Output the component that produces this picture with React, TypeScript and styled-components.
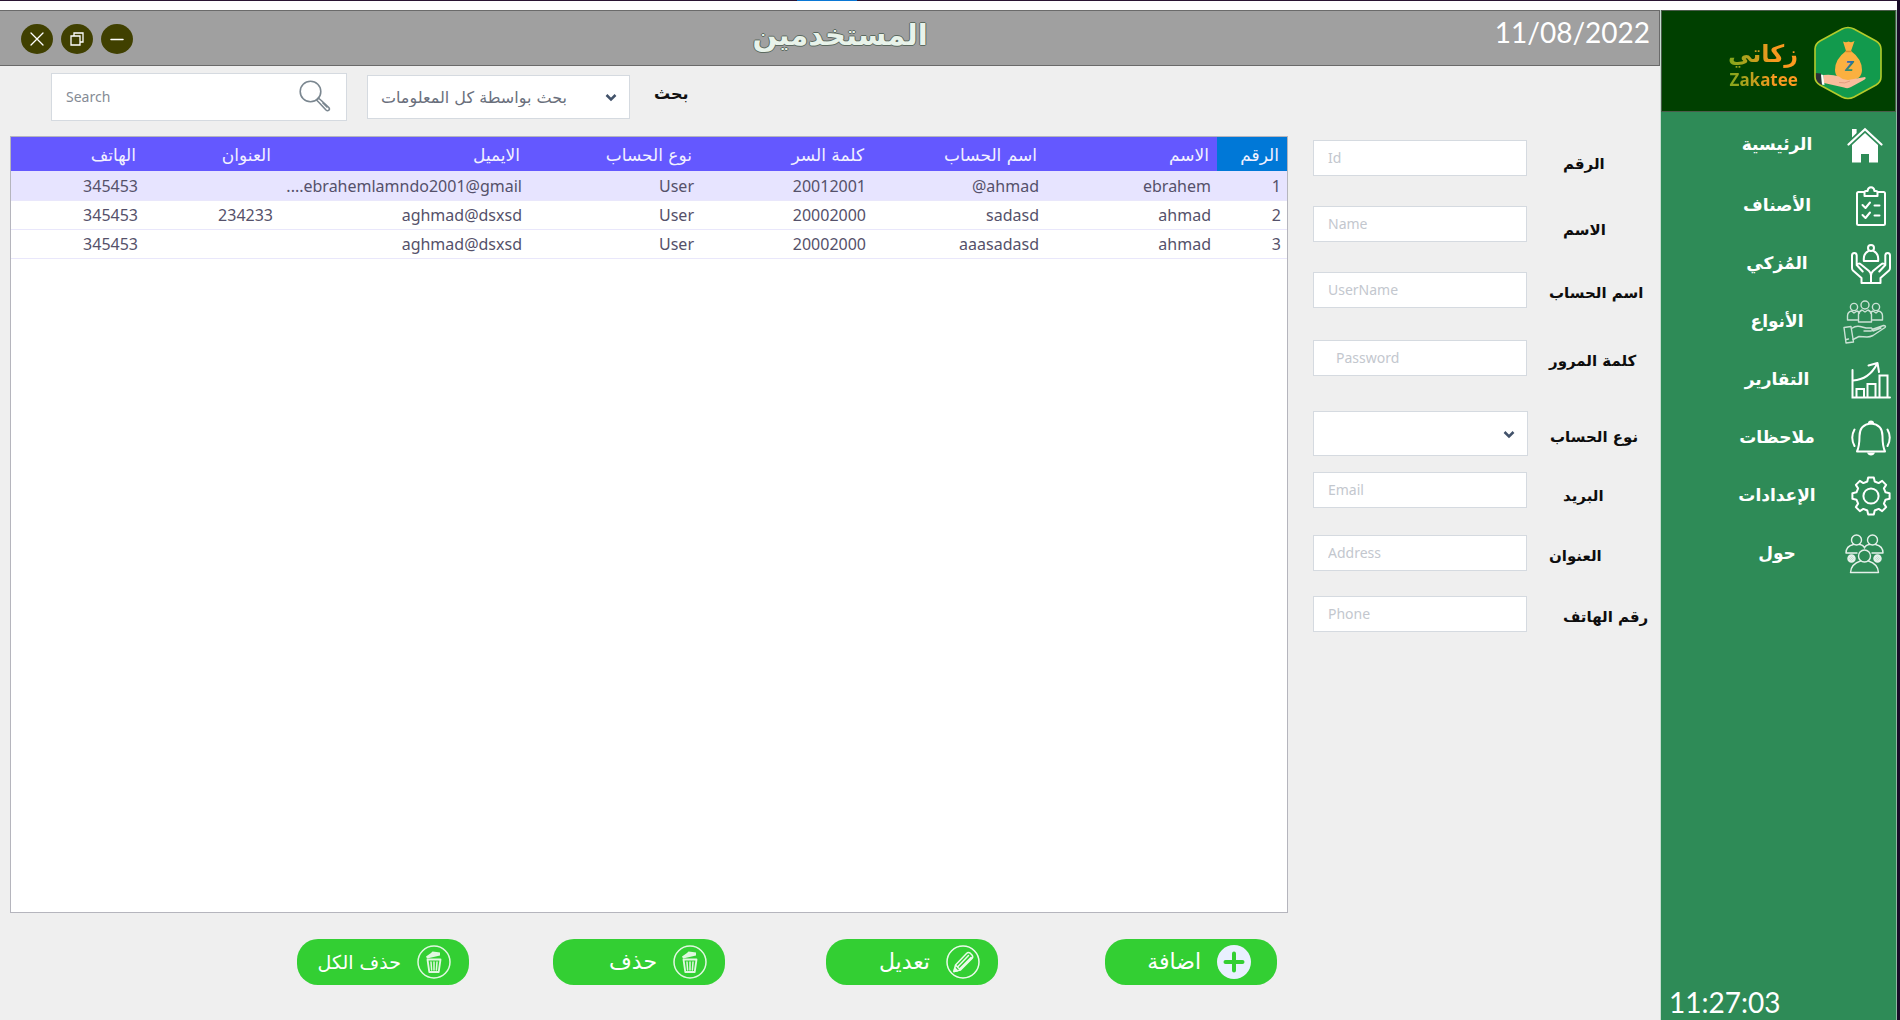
import React from "react";
import styled, { createGlobalStyle, css } from "styled-components";

const latin = `"Noto Sans", "Open Sans", "DejaVu Sans", sans-serif`;
const arabic = `"DejaVu Sans", "Noto Sans", sans-serif`;

const GlobalStyle = createGlobalStyle`
  *, *::before, *::after { box-sizing: border-box; }
  body { margin: 0; background: #efefef; font-family: ${latin}; }
  button, input, select { font: inherit; }
`;

/* ---------- window frame ---------- */

const Frame = styled.div`
  min-height: 100vh;
  display: flex;
  flex-direction: column;
  border-right: 3px solid #1a0b28;
`;

const Strip = styled.div`
  height: 10px;
  padding-left: 42%;
  background: #fff;
  border-top: 1px solid #2a1433;
  display: flex;
`;

const StripMark = styled.span`
  width: 60px;
  height: 1px;
  margin-top: -1px;
  background: #0a78d6;
`;

const Shell = styled.div`
  flex: 1;
  display: grid;
  grid-template-columns: minmax(0, 1fr) 237px;
`;

const Main = styled.main`
  display: flex;
  flex-direction: column;
  background: #efefef;
`;

/* ---------- title bar ---------- */

const TitleBar = styled.header`
  height: 56px;
  display: grid;
  grid-template-columns: 1fr auto 1fr;
  padding-left: 21px;
  background: #a0a0a0;
  border: 1px solid #6a6a6a;
  border-width: 1px 1px 1px 0;
`;

const WindowButtons = styled.div`
  padding-top: 2px;
  display: flex;
  align-items: center;
  gap: 8px;
`;

const WindowButton = styled.button`
  width: 32px;
  height: 30px;
  padding: 0;
  border: 0;
  border-radius: 50%;
  background: #404000;
  color: #fff;
  display: grid;
  place-items: center;
`;

const PageTitle = styled.h1`
  margin: 0;
  font: 700 29px/48px ${arabic};
  color: #e8f3ea;
  text-shadow: 1px 0 #5c6a60, -1px 0 #5c6a60, 0 1px #5c6a60, 0 -1px #5c6a60;
`;

const DateText = styled.time`
  justify-self: end;
  padding-right: 9px;
  font: 400 28px/42px Lato, sans-serif;
  color: #fff;
`;

/* ---------- workspace ---------- */

const Workspace = styled.div`
  flex: 1;
  display: grid;
  grid-template-columns: minmax(0, 1fr) 347px;
  column-gap: 25px;
  padding-left: 10px;
`;

const ListPane = styled.section`
  display: flex;
  flex-direction: column;
`;

const Toolbar = styled.div`
  height: 62px;
  margin-bottom: 8px;
  padding-left: 41px;
  display: flex;
  align-items: center;
`;

const SearchBox = styled.label`
  width: 296px;
  height: 48px;
  margin-right: 20px;
  padding: 0 15px 2px 14px;
  display: flex;
  align-items: center;
  background: #fff;
  border: 1px solid #d5dae0;
`;

const SearchInput = styled.input`
  flex: 1;
  min-width: 0;
  padding: 0;
  border: 0;
  outline: 0;
  background: none;
  font-size: 14px;
  &::placeholder { color: #858b95; opacity: 1; }
`;

const SelectWrap = styled.div<{ $wide?: boolean }>`
  position: relative;
  width: ${(p) => (p.$wide ? 263 : 215)}px;
  height: ${(p) => (p.$wide ? 44 : 45)}px;
`;

const Select = styled.select`
  appearance: none;
  width: 100%;
  height: 100%;
  padding: 0 62px 0 4px;
  border: 1px solid #d5dae0;
  border-radius: 0;
  background: #fff;
  color: #6a6f7c;
  font: 16px ${arabic};
  direction: rtl;
`;

const Chevron = styled.svg`
  position: absolute;
  right: 13px;
  top: calc(50% - 4px);
  pointer-events: none;
`;

const SearchLabel = styled.label`
  margin-left: 24px;
  padding-bottom: 6px;
  font: 700 16px/24px ${arabic};
  color: #111;
`;

const TableFrame = styled.div`
  flex: 1;
  background: #fff;
  border: 1px solid #b5b5bd;
`;

const Table = styled.table`
  width: 100%;
  table-layout: fixed;
  border-collapse: collapse;
  direction: rtl;
`;

const HeadCell = styled.th<{ $active?: boolean }>`
  height: 34px;
  padding: 2px 8px 0 0;
  text-align: right;
  font: 400 17px/32px ${arabic};
  color: #f2f1ff;
  background: ${(p) => (p.$active ? "#0078d7" : "#6458ff")};
`;

const Row = styled.tr<{ $selected?: boolean }>`
  height: 29px;
  background: ${(p) => (p.$selected ? "#e7e4ff" : "#fff")};
  border-bottom: 1px solid #e9e7fb;
`;

const Cell = styled.td`
  padding: 1px 6px 0 0;
  direction: ltr;
  text-align: right;
  white-space: nowrap;
  font-size: 16px;
  line-height: 24px;
  color: #55516a;
`;

const Actions = styled.div`
  padding: 26px 0 35px 287px;
  display: grid;
  grid-template-columns: 256fr 273fr 279fr 183fr;
`;

const ActionButton = styled.button<{ $inset?: boolean; $long?: boolean }>`
  width: 172px;
  height: 46px;
  padding: 0 ${(p) => (p.$inset ? 26 : 18)}px 0 0;
  border: 0;
  border-radius: 21px;
  background: #33cf33;
  color: #fff;
  display: flex;
  align-items: center;
  gap: 16px;
  direction: rtl;
  font: 400 ${(p) => (p.$long ? 19 : 22)}px/28px ${arabic};
`;

/* ---------- form ---------- */

const Form = styled.form`
  padding-top: 74px;
  display: flex;
  flex-direction: column;
`;

const Field = styled.div<{ $gap: number }>`
  display: flex;
  align-items: center;
  margin-bottom: ${(p) => p.$gap}px;
`;

const Input = styled.input<{ $deep?: boolean }>`
  width: 214px;
  height: 36px;
  padding: 0 14px 2px ${(p) => (p.$deep ? 22 : 14)}px;
  border: 1px solid #d5dae0;
  background: #fff;
  outline: 0;
  font-size: 14px;
  &::placeholder { color: #c3c7ce; opacity: 1; }
`;

const FieldLabel = styled.label<{ $indent?: boolean; $low?: boolean }>`
  padding-left: ${(p) => (p.$indent ? 36 : 22)}px;
  padding-top: ${(p) => (p.$low ? 12 : 6)}px;
  font: 700 15px/24px ${arabic};
  color: #0d0d0d;
  white-space: nowrap;
`;

/* ---------- sidebar ---------- */

const Sidebar = styled.aside`
  display: flex;
  flex-direction: column;
  background: #2e8b57;
  border-left: 1px solid #c5dccf;
  border-right: 1px solid #8fb8a2;
`;

const Brand = styled.div`
  height: 102px;
  padding: 4px 13px 0 0;
  display: flex;
  align-items: center;
  justify-content: flex-end;
  gap: 16px;
  background: #004000;
  border: 1px solid #4b5c4b;
`;

const BrandName = styled.div`
  display: flex;
  flex-direction: column;
  align-items: flex-end;
  padding-top: 4px;
  background: linear-gradient(90deg, #7fa81c, #f7981f 65%, #ff9a1f);
  background-clip: text;
  -webkit-background-clip: text;
  color: transparent;
`;

const BrandArabic = styled.span`
  font: 700 24px/30px ${arabic};
`;

const BrandLatin = styled.span`
  font: 700 17px/22px "Noto Sans", sans-serif;
`;

const Nav = styled.nav`
  flex: 1;
  padding-top: 4px;
  display: flex;
  flex-direction: column;
`;

const NavLink = styled.a<{ $current?: boolean }>`
  height: 58px;
  padding-left: 65px;
  display: flex;
  align-items: center;
  color: #fff;
  text-decoration: none;
  ${(p) => p.$current && css`margin-bottom: 3px;`}
`;

const NavText = styled.span`
  width: 102px;
  text-align: center;
  font: 700 17px/26px "Liberation Serif", "DejaVu Sans", serif;
`;

const NavIcon = styled.span<{ $near?: boolean }>`
  width: 46px;
  margin-left: ${(p) => (p.$near ? 14 : 20)}px;
  display: flex;
  justify-content: center;
`;

const Clock = styled.time`
  padding: 0 0 2px 8px;
  font: 400 28px/32px Lato, sans-serif;
  color: #fff;
`;

/* ---------- drawings ---------- */

type DrawingProps = { w: number; h: number; sw?: number; o?: number; children: React.ReactNode };

const Drawing = ({ w, h, sw = 2, o = 1, children }: DrawingProps) => (
  <svg width={w} height={h} viewBox={`0 0 ${w} ${h}`} fill="none" stroke="currentColor"
    strokeWidth={sw} strokeLinecap="round" strokeLinejoin="round" opacity={o} aria-hidden="true">
    {children}
  </svg>
);

const HomeIcon = () => (
  <Drawing w={36} h={36} sw={2.2}>
    <path d="M1.5 17.5 18 2.2 34.5 17.5" strokeLinejoin="miter" />
    <path d="M5 2h4.600v4L5 10.500ZM5 18 18 6 31 18v17.500h-9V27h-8v8.500H5Z" fill="currentColor" stroke="none" />
  </Drawing>
);

const ListIcon = () => (
  <Drawing w={30} h={40} sw={2}>
    <path d="M8 6H2.500Q1 6 1 7.500V37.500Q1 39 2.500 39H27.500Q29 39 29 37.500V7.500Q29 6 27.500 6H22" />
    <path d="M8.500 10V6.500Q8.500 5 10 5H11.500Q12 1.300 15 1.300T18.500 5H20Q21.500 5 21.500 6.500V10Z" />
    <path d="m6.500 19 3 3 4.500-5.500M18.500 19.500h5M6.500 29l3 3 4.500-5.500M18.500 29.500h5" />
  </Drawing>
);

const HandsIcon = () => (
  <Drawing w={40} h={40} sw={2}>
    <circle cx="20" cy="4" r="3" />
    <path d="M12.800 17v-2.500c0-3.500 2-6 4.500-7.300M27.200 17v-2.500c0-3.500-2-6-4.500-7.300M12.800 17h14.400" />
    <path d="M20 39H10.500v-5L2 26.500Q1 25.500 1 24V11.500Q1 9 3.300 9T5.700 11.500V21l6 6.500M5.700 21Q7.500 18.500 10 20.500L18 27Q20 29 20 31.500V39" />
    <path d="M20 39H29.500v-5L38 26.500Q39 25.500 39 24V11.500Q39 9 36.700 9T34.300 11.500V21l-6 6.500M34.300 21Q32.500 18.500 30 20.500L22 27Q20 29 20 31.500" />
  </Drawing>
);

const GroupHandIcon = () => (
  <Drawing w={44} h={44} sw={1.4} o={0.75}>
    <circle cx="11" cy="7" r="3.600" />
    <circle cx="22" cy="5" r="4" />
    <circle cx="33" cy="7" r="3.600" />
    <path d="M14.500 20H4.500v-4q0-4 4-5l2.500 2 3-2q1.500.5 2.500 2M29.500 20h10v-4q0-4-4-5L33 13l-3-2q-1.500.5-2.500 2" />
    <path d="M15.500 22V14.500q0-3 3.500-4.500l3 2 3-2q3.500 1.500 3.500 4.500V22Z" />
    <path d="m1 27.500 7-1L10.500 42 3 43Z M3.500 39.500l2-.5" />
    <path d="M8.500 28.500Q13 25.500 17 26.500L23 28h5.500q2.500 2-.5 3H21M29 29.500l11.500-4q3 .3 1.500 2L30 35.500Q27 37 24 37l-8-.5-6 3M30 31l8-3" />
  </Drawing>
);

const ChartIcon = () => (
  <Drawing w={40} h={38} sw={2}>
    <path d="M1.500 9v27.500H39M5.500 36v-8h7.500v8M16.500 36V23h8v13M28.500 36V14.500h8V36" strokeLinejoin="miter" />
    <path d="M2 19.500Q18 18.500 26 3M17.500 4.500 26.500 2 28 11" />
  </Drawing>
);

const BellIcon = () => (
  <Drawing w={40} h={36} sw={2}>
    <path d="M6 31.500Q8.500 26 8.500 16 8.500 4.500 20 3.500 31.500 4.500 31.500 16 31.500 26 34 31.500Z" />
    <path d="M17 3q0-2.500 3-2.500T23 3ZM16 32.500h8q-1 3-4 3t-4-3Z" fill="currentColor" stroke="none" />
    <path d="M3.500 9.500Q-1 17.500 3.500 26M36.500 9.500Q41 17.500 36.500 26" />
  </Drawing>
);

const gearPath = (() => {
  const points: string[] = [];
  for (let tooth = 0; tooth < 8; tooth += 1) {
    const mid = (tooth * Math.PI) / 4;
    [[-0.25, 15], [-0.15, 18.8], [0.15, 18.8], [0.25, 15]].forEach(([turn, r]) => {
      points.push(`${(20 + r * Math.sin(mid + turn)).toFixed(2)} ${(20 - r * Math.cos(mid + turn)).toFixed(2)}`);
    });
  }
  return `M${points.join("L")}Z`;
})();

const GearIcon = () => (
  <Drawing w={40} h={40} sw={2}>
    <path d={gearPath} />
    <circle cx="20" cy="20" r="7.600" />
  </Drawing>
);

const PeopleIcon = () => (
  <Drawing w={40} h={40} sw={1.4} o={0.88}>
    <circle cx="11.500" cy="6" r="5" />
    <circle cx="27.500" cy="6" r="5" />
    <path d="M12 19H1q0-7 7.500-8.500M14.500 10.500q4 .5 5 3.500 1-3 5-3.500M30.500 10.500Q38 12 38 19H27" />
    <circle cx="19.500" cy="22" r="6" />
    <path d="M15.500 27Q6 30 5.500 38.500h28Q33 30 23.500 27" />
    <circle cx="6.500" cy="24.500" r="3" strokeWidth="2.500" />
    <circle cx="32.500" cy="24.500" r="3" strokeWidth="2.500" />
    <circle cx="6.500" cy="24.500" r="1" />
    <circle cx="32.500" cy="24.500" r="1" />
  </Drawing>
);

const TrashIcon = () => (
  <Drawing w={34} h={34} sw={1.5} o={0.85}>
    <circle cx="17" cy="17" r="16" />
    <path d="M10.500 14.500h13l-1.800 12.500h-9.400Z" strokeWidth="1.800" />
    <path d="M14 17l.6 8M17 17v8M20 17l-.6 8" strokeWidth="1.500" />
    <path d="M9 11.500 14 8l1.500-1.500 4 .5 3.500.5v3L10 13.500Z" fill="currentColor" stroke="none" />
  </Drawing>
);

const PencilIcon = () => (
  <Drawing w={34} h={34} sw={1.5} o={0.9}>
    <circle cx="17" cy="17" r="16" />
    <path d="M8 26.500 9.500 20 20.500 8.500Q22 7 24 8l2 2q1.500 2 0 3.500L14.500 25ZM9.500 20l5 5M12 21.500 22.500 10.500M14 23.500 25 12.500" />
    <path d="m8 26.500.8-3.500 2.700 2.700Z" fill="currentColor" />
  </Drawing>
);

const AddIcon = () => (
  <svg width="34" height="34" viewBox="0 0 34 34" aria-hidden="true">
    <circle cx="17" cy="17" r="17" fill="#e9f0ff" />
    <path d="M17 8.500v17M8.500 17h17" stroke="#33cf33" strokeWidth="4" strokeLinecap="round" />
  </svg>
);

const SearchIcon = () => (
  <svg width="32" height="32" viewBox="0 0 32 32" fill="none" stroke="#7b8790" strokeWidth="1.600" aria-hidden="true">
    <circle cx="11.500" cy="11.500" r="10.300" />
    <path d="m17.500 20 1.800-2 3 2.500 7.500 7q1.200 1.500 0 2.700-1.300 1.200-2.800-.2L20 22.500ZM23.500 22.500l5 5" strokeLinejoin="round" />
  </svg>
);

const ChevronIcon = () => (
  <Chevron width="12" height="9" viewBox="0 0 12 9" fill="none" stroke="#42526a" strokeWidth="2.500" aria-hidden="true">
    <path d="m1.500 2 4.500 4.500L10.500 2" />
  </Chevron>
);

const hexagon = "M28 3Q34 0 40 3L62 15Q67 18 67 23V51Q67 56 62 59L40 71Q34 74 28 71L6 59Q1 56 1 51V23Q1 18 6 15Z";

const Emblem = () => (
  <svg width="68" height="74" viewBox="0 0 68 74" role="img" aria-label="Zakatee">
    <defs>
      <clipPath id="hex"><path d={hexagon} /></clipPath>
      <linearGradient id="zed" x1="0" y1="0" x2="0" y2="1">
        <stop offset="0.3" stopColor="#2a6cb0" />
        <stop offset="1" stopColor="#3c9a4a" />
      </linearGradient>
    </defs>
    <g clipPath="url(#hex)">
      <rect width="68" height="74" fill="#129a4d" />
      <path d="M29 15.500q3 1.500 5.500 0 3 1.500 6-.5L37 25Q48 33 48 44q0 10-13.500 10.500Q21 54 21 44 21 33 32 25Z" fill="#fbb040" />
      <path d="M31.500 25.500h6" stroke="#d98c2c" strokeWidth="1.500" />
      <path d="m0 47 7 .5 1 12-7-2Z" fill="#2d3038" />
      <path d="m7 48.500 2.500.5 1 10-2.500-.5Z" fill="#fff" />
      <path d="M9.500 49Q18 48 25 50.500q3 3 9 3.500l17-3q2 1.500-2 3.500L37 61q-3 2-7 .5L10 57Z" fill="#f9bd9c" />
      <path d="M25 56.500q6 1.500 11-1.500" stroke="#e39d80" strokeWidth="1" fill="none" />
    </g>
    <path d={hexagon} fill="none" stroke="#b3cb2b" strokeWidth="1.600" />
    <text x="35" y="45" textAnchor="middle" fontFamily="Open Sans, sans-serif" fontSize="15" fontWeight="700" fontStyle="italic" fill="url(#zed)">Z</text>
  </svg>
);

/* ---------- data ---------- */

const columns = [
  { title: "الرقم", width: 70 },
  { title: "الاسم", width: 172 },
  { title: "اسم الحساب", width: 173 },
  { title: "كلمة السر", width: 172 },
  { title: "نوع الحساب", width: 172 },
  { title: "الايميل", width: 249 },
  { title: "العنوان", width: 135 },
  { title: "الهاتف", width: 133 },
];

const users = [
  ["1", "ebrahem", "@ahmad", "20012001", "User", "....ebrahemlamndo2001@gmail", "", "345453"],
  ["2", "ahmad", "sadasd", "20002000", "User", "aghmad@dsxsd", "234233", "345453"],
  ["3", "ahmad", "aaasadasd", "20002000", "User", "aghmad@dsxsd", "", "345453"],
];

const fields = [
  { id: "id", label: "الرقم", hint: "Id", gap: 30, indent: true, low: true },
  { id: "name", label: "الاسم", hint: "Name", gap: 30, indent: true, low: true },
  { id: "username", label: "اسم الحساب", hint: "UserName", gap: 32 },
  { id: "password", label: "كلمة المرور", hint: "Password", gap: 35, deep: true },
  { id: "role", label: "نوع الحساب", gap: 16 },
  { id: "email", label: "البريد", hint: "Email", gap: 27, indent: true, low: true },
  { id: "address", label: "العنوان", hint: "Address", gap: 25 },
  { id: "phone", label: "رقم الهاتف", hint: "Phone", gap: 0, indent: true },
];

const links = [
  { text: "الرئيسية", Icon: HomeIcon, near: true },
  { text: "الأصناف", Icon: ListIcon },
  { text: "المُزكي", Icon: HandsIcon },
  { text: "الأنواع", Icon: GroupHandIcon, near: true },
  { text: "التقارير", Icon: ChartIcon },
  { text: "ملاحظات", Icon: BellIcon },
  { text: "الإعدادات", Icon: GearIcon },
  { text: "حول", Icon: PeopleIcon, near: true },
];

const actions = [
  { text: "حذف الكل", Icon: TrashIcon, long: true },
  { text: "حذف", Icon: TrashIcon },
  { text: "تعديل", Icon: PencilIcon },
  { text: "اضافة", Icon: AddIcon, inset: true },
];

export default function App() {
  return (
    <Frame>
      <GlobalStyle />
      <Strip><StripMark /></Strip>
      <Shell>
        <Main>
          <TitleBar>
            <WindowButtons>
              <WindowButton aria-label="Close">
                <Drawing w={14} h={14} sw={1.3}><path d="m1 1 12 12M13 1 1 13" /></Drawing>
              </WindowButton>
              <WindowButton aria-label="Restore">
                <Drawing w={14} h={14} sw={1.3}><path d="M1 4h9v9H1ZM4 4V1h9v9h-3" strokeLinejoin="miter" /></Drawing>
              </WindowButton>
              <WindowButton aria-label="Minimize">
                <Drawing w={14} h={14} sw={1.5}><path d="M1 7.500h12" /></Drawing>
              </WindowButton>
            </WindowButtons>
            <PageTitle lang="ar">المستخدمين</PageTitle>
            <DateText>11/08/2022</DateText>
          </TitleBar>
          <Workspace>
            <ListPane>
              <Toolbar>
                <SearchBox>
                  <SearchInput type="text" placeholder="Search" aria-label="Search" />
                  <SearchIcon />
                </SearchBox>
                <SelectWrap $wide>
                  <Select id="scope"><option>بحث بواسطة كل المعلومات</option></Select>
                  <ChevronIcon />
                </SelectWrap>
                <SearchLabel htmlFor="scope">بحث</SearchLabel>
              </Toolbar>
              <TableFrame>
                <Table>
                  <colgroup>
                    {columns.map((c) => <col key={c.title} style={{ width: c.width }} />)}
                  </colgroup>
                  <thead>
                    <tr>
                      {columns.map((c, i) => <HeadCell key={c.title} $active={i === 0} scope="col">{c.title}</HeadCell>)}
                    </tr>
                  </thead>
                  <tbody>
                    {users.map((user, i) => (
                      <Row key={user[0]} $selected={i === 0}>
                        {user.map((value, j) => <Cell key={columns[j].title}>{value}</Cell>)}
                      </Row>
                    ))}
                  </tbody>
                </Table>
              </TableFrame>
              <Actions>
                {actions.map(({ text, Icon, inset, long }) => (
                  <ActionButton key={text} type="button" $inset={inset} $long={long}><Icon />{text}</ActionButton>
                ))}
              </Actions>
            </ListPane>
            <Form>
              {fields.map((f) => (
                <Field key={f.id} $gap={f.gap}>
                  {f.hint ? (
                    <Input id={f.id} type={f.id === "password" ? "password" : "text"} placeholder={f.hint} $deep={f.deep} />
                  ) : (
                    <SelectWrap><Select id={f.id} /><ChevronIcon /></SelectWrap>
                  )}
                  <FieldLabel htmlFor={f.id} $indent={f.indent} $low={f.low}>{f.label}</FieldLabel>
                </Field>
              ))}
            </Form>
          </Workspace>
        </Main>
        <Sidebar>
          <Brand>
            <BrandName>
              <BrandArabic>زكاتي</BrandArabic>
              <BrandLatin>Zakatee</BrandLatin>
            </BrandName>
            <Emblem />
          </Brand>
          <Nav>
            {links.map(({ text, Icon, near }, i) => (
              <NavLink key={text} href="#" $current={i === 0}>
                <NavText>{text}</NavText>
                <NavIcon $near={near}><Icon /></NavIcon>
              </NavLink>
            ))}
          </Nav>
          <Clock>11:27:03</Clock>
        </Sidebar>
      </Shell>
    </Frame>
  );
}
